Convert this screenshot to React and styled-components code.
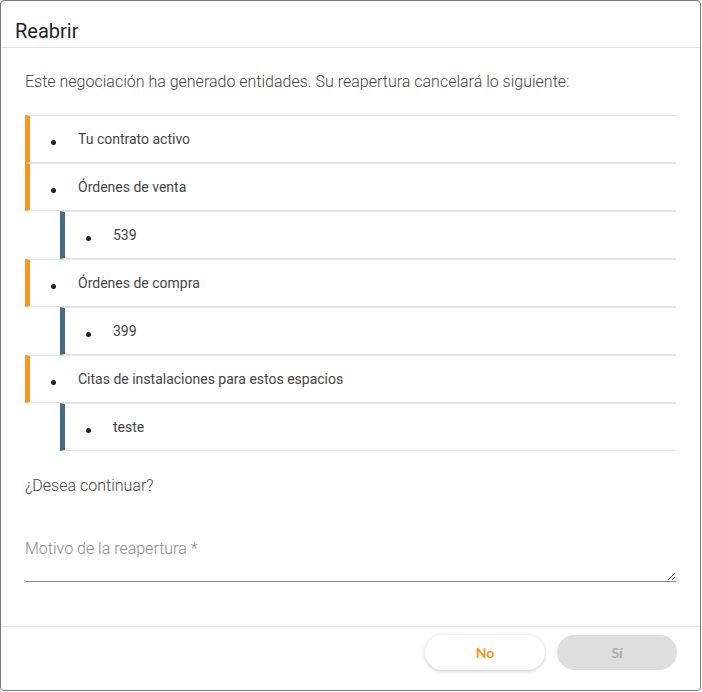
import React from 'react';
import styled, {createGlobalStyle} from 'styled-components';

const GlobalStyle = createGlobalStyle`
  body {
    margin: 0;
    background: #fff;
    font-family: Roboto, "Liberation Sans", sans-serif;
  }
`;

const Dialog = styled.div({
  boxSizing: 'border-box',
  width: '701px',
  height: '691px',
  border: '1px solid #7b7b7b',
  borderRadius: '4px',
  background: '#fff',
  display: 'flex',
  flexDirection: 'column',
});

const Header = styled.header({
  height: '47px',
  borderBottom: '1px solid #e2e2e2',
  padding: '18px 14px 0',
  boxSizing: 'border-box',
});

const Title = styled.h2({
  margin: 0,
  fontSize: '20px',
  lineHeight: '24px',
  fontWeight: 400,
  color: '#222',
});

const Body = styled.main({
  flex: 1,
  padding: '24px 24px 0',
});

const Text = styled.p({
  margin: 0,
  fontSize: '16px',
  lineHeight: '20px',
  fontWeight: 300,
  color: '#444',
});

const List = styled.ul`
  list-style: none;
  margin: ${p => (p.$nested ? '0 0 0 35px' : '23px 0 25px')};
  padding: 0;
`;

const Item = styled.li`
  display: flex;
  align-items: center;
  height: 46px;
  border-top: 1px solid #e4e4e4;
  border-bottom: 1px solid #e4e4e4;
  border-left: 5px solid ${p => (p.$nested ? '#456a85' : '#f7941d')};
  font-size: 14px;
  color: #454545;

  &::before {
    content: '';
    width: 5px;
    height: 5px;
    border-radius: 50%;
    background: #222;
    margin: 6px 22px 0 21px;
  }
`;

const Field = styled.textarea({
  display: 'block',
  boxSizing: 'border-box',
  width: '100%',
  height: '53px',
  marginTop: '33px',
  padding: '10px 0 0',
  border: 'none',
  borderBottom: '1px solid #888',
  outline: 'none',
  fontFamily: 'Roboto, "Liberation Sans", sans-serif',
  fontSize: '16px',
  fontWeight: 300,
  lineHeight: '20px',
  color: '#333',
  '&::placeholder': {
    color: '#8a8a8a',
  },
});

const Footer = styled.footer({
  display: 'flex',
  justifyContent: 'flex-end',
  gap: '12px',
  borderTop: '1px solid #e2e2e2',
  padding: '8px 23px 20px',
});

const Button = styled.button`
  width: 120px;
  height: 35px;
  border: none;
  border-radius: 18px;
  font-family: Lato, "Liberation Sans", sans-serif;
  font-size: 14px;
  font-weight: 700;
  background: ${p => (p.$primary ? '#dedede' : '#fff')};
  color: ${p => (p.$primary ? '#aaa' : '#f7941d')};
  box-shadow: ${p => (p.$primary ? 'none' : '0 1px 4px rgba(0,0,0,.22)')};
`;

const entities = [
  {name: 'Tu contrato activo', children: []},
  {name: 'Órdenes de venta', children: ['539']},
  {name: 'Órdenes de compra', children: ['399']},
  {name: 'Citas de instalaciones para estos espacios', children: ['teste']},
];

const App = () => {
  return (
    <Dialog>
      <GlobalStyle />
      <Header>
        <Title>Reabrir</Title>
      </Header>
      <Body>
        <Text>Este negociación ha generado entidades. Su reapertura cancelará lo siguiente:</Text>
        <List>
          {entities.map(entity => (
            <React.Fragment key={entity.name}>
              <Item>{entity.name}</Item>
              {entity.children.length > 0 &&
                <List $nested>
                  {entity.children.map(child => (
                    <Item $nested key={child}>{child}</Item>
                  ))}
                </List>
              }
            </React.Fragment>
          ))}
        </List>
        <Text>¿Desea continuar?</Text>
        <Field placeholder="Motivo de la reapertura *" />
      </Body>
      <Footer>
        <Button>No</Button>
        <Button $primary disabled>Sí</Button>
      </Footer>
    </Dialog>
  );
};

export default App;
